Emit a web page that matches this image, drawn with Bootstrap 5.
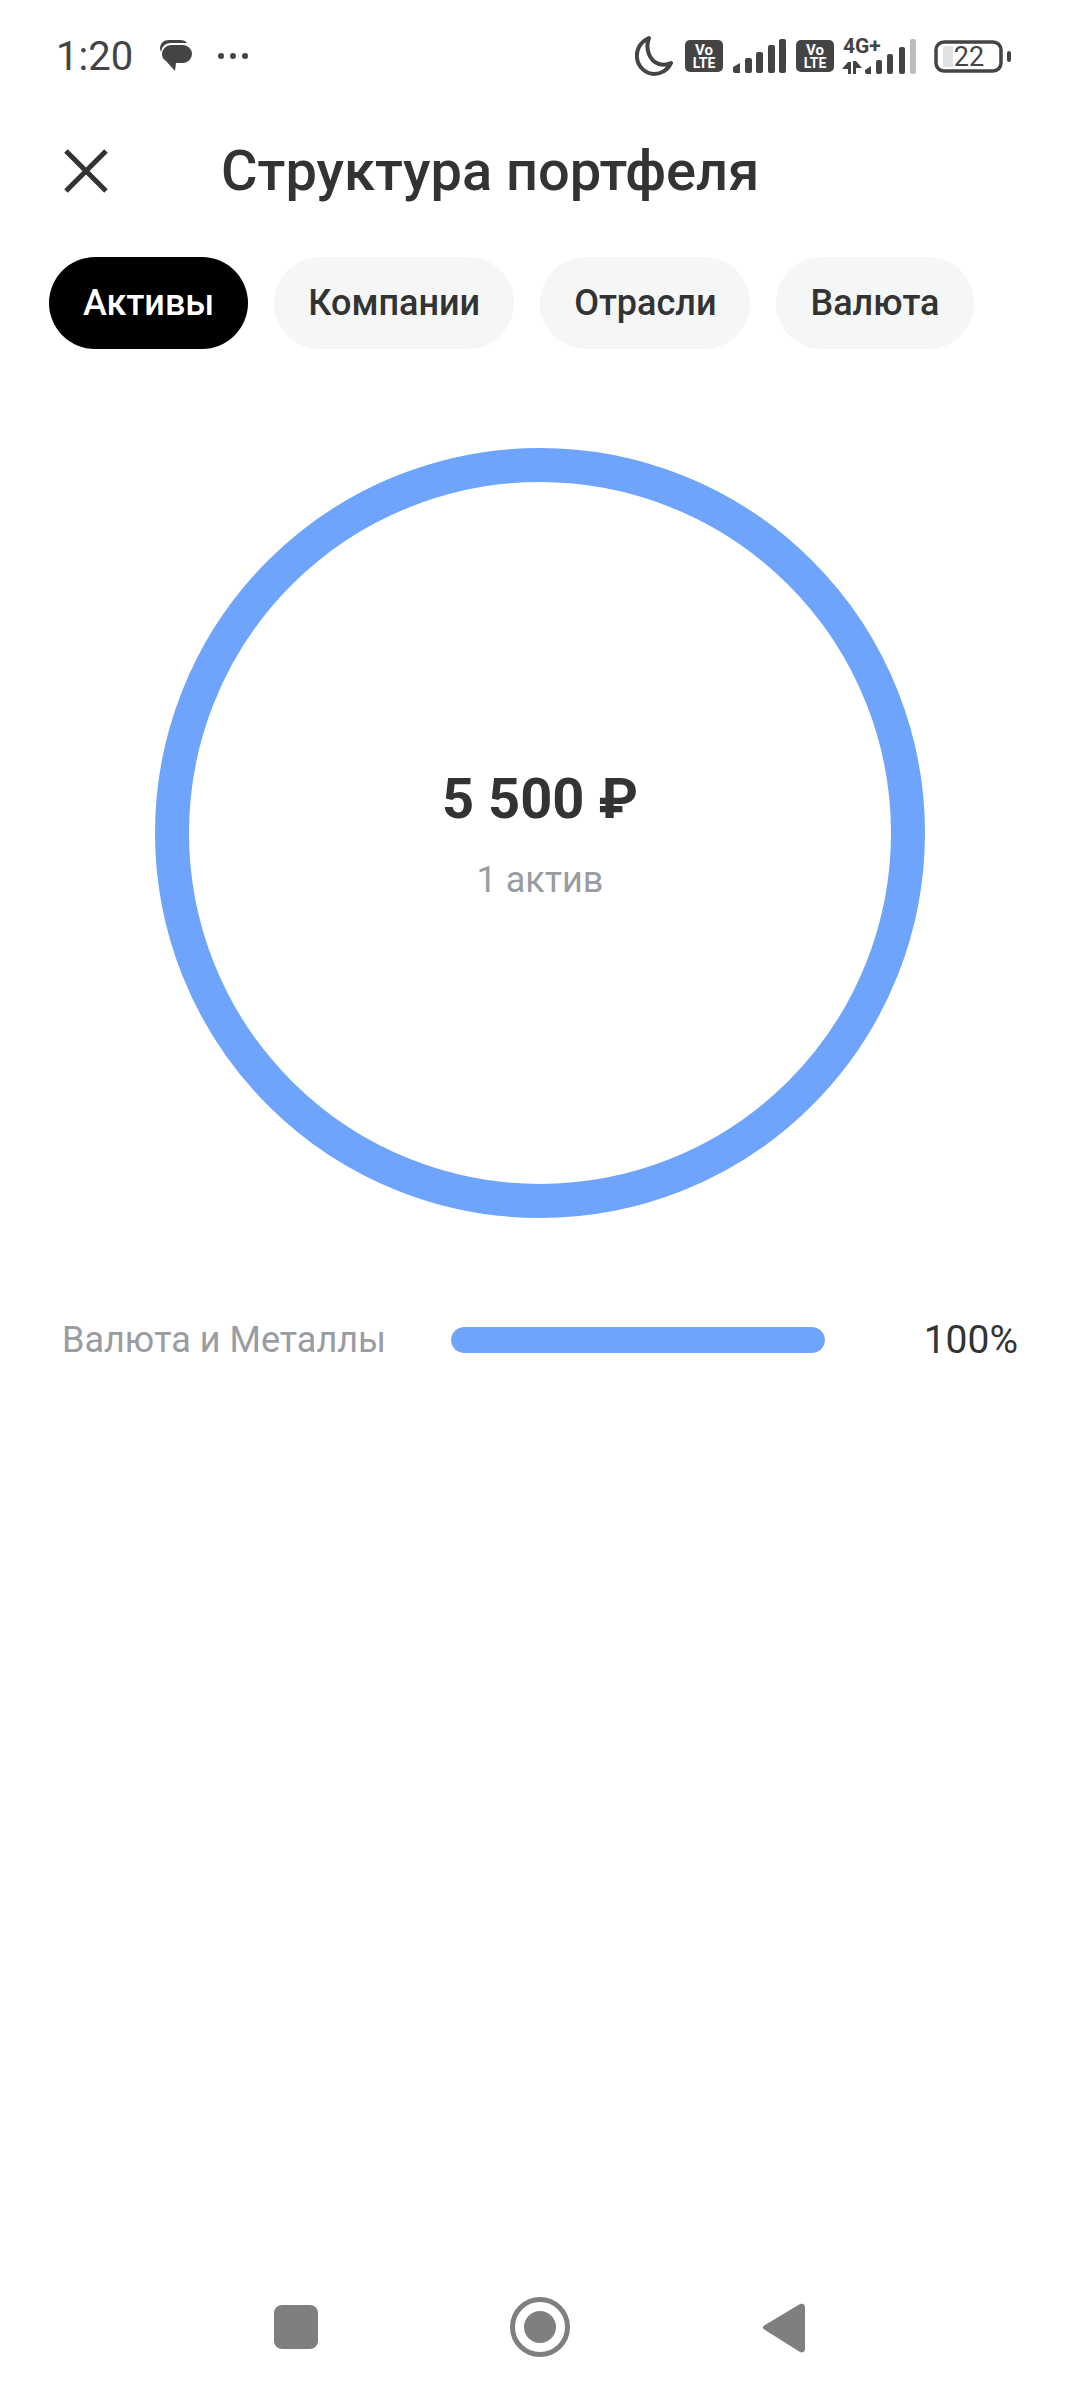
<!DOCTYPE html>
<html lang="ru">
<head>
    <meta charset="utf-8">
    <title>Структура портфеля</title>
    <link href="https://cdn.jsdelivr.net/npm/bootstrap@5.3.0/dist/css/bootstrap.min.css" rel="stylesheet">
    <style>
        body { font-family: Roboto, "Liberation Sans", sans-serif; background: #fff; color: #333; }
        .app-page { width: 1080px; height: 2400px; }
        .status-bar { height: 112px; padding: 0 69px 0 56px; color: #444; }
        .status-time { font-size: 40px; width: 104px; line-height: 1; padding-top: 2px; }
        .status-bar svg { display: block; }
        .status-left svg + svg { margin-left: 25px; }
        .status-right svg:nth-child(2) { margin-left: 12px; }
        .status-right svg:nth-child(3), .status-right svg:nth-child(4) { margin-left: 10px; }
        .status-right svg:nth-child(5) { margin-left: 8px; }
        .status-right svg:nth-child(6) { margin-left: 16px; }
        .top-bar { height: 118px; padding-left: 64px; }
        .top-title { font-size: 56px; font-weight: 500; margin: 0 0 0 113px; line-height: 1; color: #333; }
        .tabs-row { padding-left: 49px; gap: 26px; margin-top: 27px; }
        .tabs-row .nav-link { height: 92px; padding: 0 34px; font-size: 36px; font-weight: 500; background: #f5f7f7; color: #333; display: flex; align-items: center; border-radius: 46px; }
        .tabs-row .nav-link.active { background: #000; color: #fff; }
        .ring-wrap { margin-top: 99px; }
        .ring-circle { width: 770px; height: 770px; border: 34px solid #6ea4fb; }
        .ring-sum { font-size: 56px; font-weight: 700; line-height: 1; color: #333; margin-top: 2px; }
        .ring-note { font-size: 36px; line-height: 1; color: #999ca1; margin-top: 35px; }
        .legend-row { margin-top: 102px; padding: 0 62px; height: 40px; }
        .legend-name { font-size: 36px; color: #999ca1; width: 389px; }
        .legend-bar { width: 374px; height: 26px; background: #eef2f7; border-radius: 13px; }
        .legend-bar .progress-bar { background: #6ea4fb; border-radius: 13px; }
        .legend-val { font-size: 39px; color: #333; }
        .bottom-nav { height: 103px; }
    </style>
</head>
<body>
<div class="app-page d-flex flex-column">

    <div class="status-bar d-flex align-items-center justify-content-between">
        <div class="status-left d-flex align-items-center">
            <span class="status-time">1:20</span>
            <svg width="32" height="32" viewBox="0 0 32 32">
                <path d="M0 9C0 3 4 0 9 0H20C23 0 26 1 27 3H11C6 3 2 6 1 12z" fill="#444"/>
                <path d="M11 5H23a9 9 0 0 1 0 18H16L15 31 6 21C3 19 2 17 2 14a9 9 0 0 1 9-9z" fill="#444"/>
            </svg>
            <svg width="32" height="8" viewBox="0 0 32 8">
                <circle cx="4" cy="4" r="3" fill="#444"/><circle cx="16" cy="4" r="3" fill="#444"/><circle cx="28" cy="4" r="3" fill="#444"/>
            </svg>
        </div>
        <div class="status-right d-flex align-items-center">
            <svg width="38" height="40" viewBox="0 0 38 40">
                <path d="M14 2C5 6 1 14 2 22c1 9 9 16 17 16 7 0 14-4 17-11-4 2-8 2-12 1C14 25 10 12 14 2z" fill="none" stroke="#444" stroke-width="4" stroke-linejoin="round"/>
            </svg>
            <svg width="38" height="32" viewBox="0 0 38 32">
                <rect width="38" height="32" rx="5" fill="#444"/>
                <text x="19" y="15" text-anchor="middle" font-family="Roboto" font-weight="700" font-size="15" fill="#fff">Vo</text>
                <text x="19" y="28" text-anchor="middle" font-family="Roboto" font-weight="700" font-size="14" fill="#fff">LTE</text>
            </svg>
            <svg width="53" height="34" viewBox="0 0 53 34">
                <path d="M0 28l7-4v10H2a2 2 0 0 1-2-2z" fill="#444"/>
                <rect x="12" y="19" width="7" height="15" rx="2" fill="#444"/>
                <rect x="23" y="13" width="7" height="21" rx="2" fill="#444"/>
                <rect x="35" y="6" width="7" height="28" rx="2" fill="#444"/>
                <rect x="46" y="0" width="7" height="34" rx="2" fill="#444"/>
            </svg>
            <svg width="38" height="32" viewBox="0 0 38 32">
                <rect width="38" height="32" rx="5" fill="#444"/>
                <text x="19" y="15" text-anchor="middle" font-family="Roboto" font-weight="700" font-size="15" fill="#fff">Vo</text>
                <text x="19" y="28" text-anchor="middle" font-family="Roboto" font-weight="700" font-size="14" fill="#fff">LTE</text>
            </svg>
            <svg width="76" height="46" viewBox="0 -3 76 46">
                <text x="1" y="17" font-family="Roboto" font-weight="700" font-size="21" fill="#444">4G+</text>
                <path d="M6 26h3v12H6v-5H0zM11 25h3l6 7h-6v6h-3z" fill="#444"/>
                <path d="M23 34l6-4v8h-4a2 2 0 0 1-2-2z" fill="#444"/>
                <rect x="34" y="24" width="6" height="14" rx="2" fill="#444"/>
                <rect x="45" y="18" width="6" height="20" rx="2" fill="#444"/>
                <rect x="57" y="11" width="6" height="27" rx="2" fill="#444"/>
                <rect x="68" y="3" width="6" height="35" rx="2" fill="#bbb"/>
            </svg>
            <svg width="77" height="33" viewBox="0 0 77 33">
                <rect x="2" y="2" width="65" height="29" rx="8" fill="none" stroke="#444" stroke-width="3.5"/>
                <rect x="9" y="6" width="10" height="21" fill="#e2e2e2"/>
                <text x="35" y="26" text-anchor="middle" font-family="Roboto" font-size="27" fill="#444">22</text>
                <rect x="73" y="11" width="4" height="11" rx="2" fill="#444"/>
            </svg>
        </div>
    </div>

    <div class="top-bar d-flex align-items-center">
        <svg width="44" height="44" viewBox="0 0 44 44">
            <path d="M2 2l40 40M42 2L2 42" stroke="#333" stroke-width="5" fill="none"/>
        </svg>
        <h1 class="top-title">Структура портфеля</h1>
    </div>

    <ul class="nav nav-pills tabs-row">
        <li class="nav-item"><a class="nav-link active" href="#">Активы</a></li>
        <li class="nav-item"><a class="nav-link" href="#">Компании</a></li>
        <li class="nav-item"><a class="nav-link" href="#">Отрасли</a></li>
        <li class="nav-item"><a class="nav-link" href="#">Валюта</a></li>
    </ul>

    <div class="ring-wrap d-flex justify-content-center">
        <div class="ring-circle rounded-circle d-flex flex-column align-items-center justify-content-center">
            <div class="ring-sum">5 500 ₽</div>
            <div class="ring-note">1 актив</div>
        </div>
    </div>

    <div class="legend-row d-flex align-items-center">
        <div class="legend-name">Валюта и Металлы</div>
        <div class="progress legend-bar">
            <div class="progress-bar" style="width: 100%"></div>
        </div>
        <div class="legend-val ms-auto">100%</div>
    </div>

    <div class="bottom-nav mt-auto d-flex align-items-start justify-content-center">
        <svg width="540" height="60" viewBox="0 0 540 60">
            <rect x="4" y="8" width="44" height="44" rx="8" fill="#7f7f7f"/>
            <circle cx="270" cy="30" r="27.5" fill="none" stroke="#7f7f7f" stroke-width="5"/>
            <circle cx="270" cy="30" r="16" fill="#7f7f7f"/>
            <path d="M495 28L530 7c2-1 5 0 5 3v42c0 3-3 4-5 3L495 33c-3-2-3-3 0-5z" fill="#7f7f7f"/>
        </svg>
    </div>
</div>
<script src="https://cdn.jsdelivr.net/npm/bootstrap@5.3.0/dist/js/bootstrap.bundle.min.js"></script>
</body>
</html>
